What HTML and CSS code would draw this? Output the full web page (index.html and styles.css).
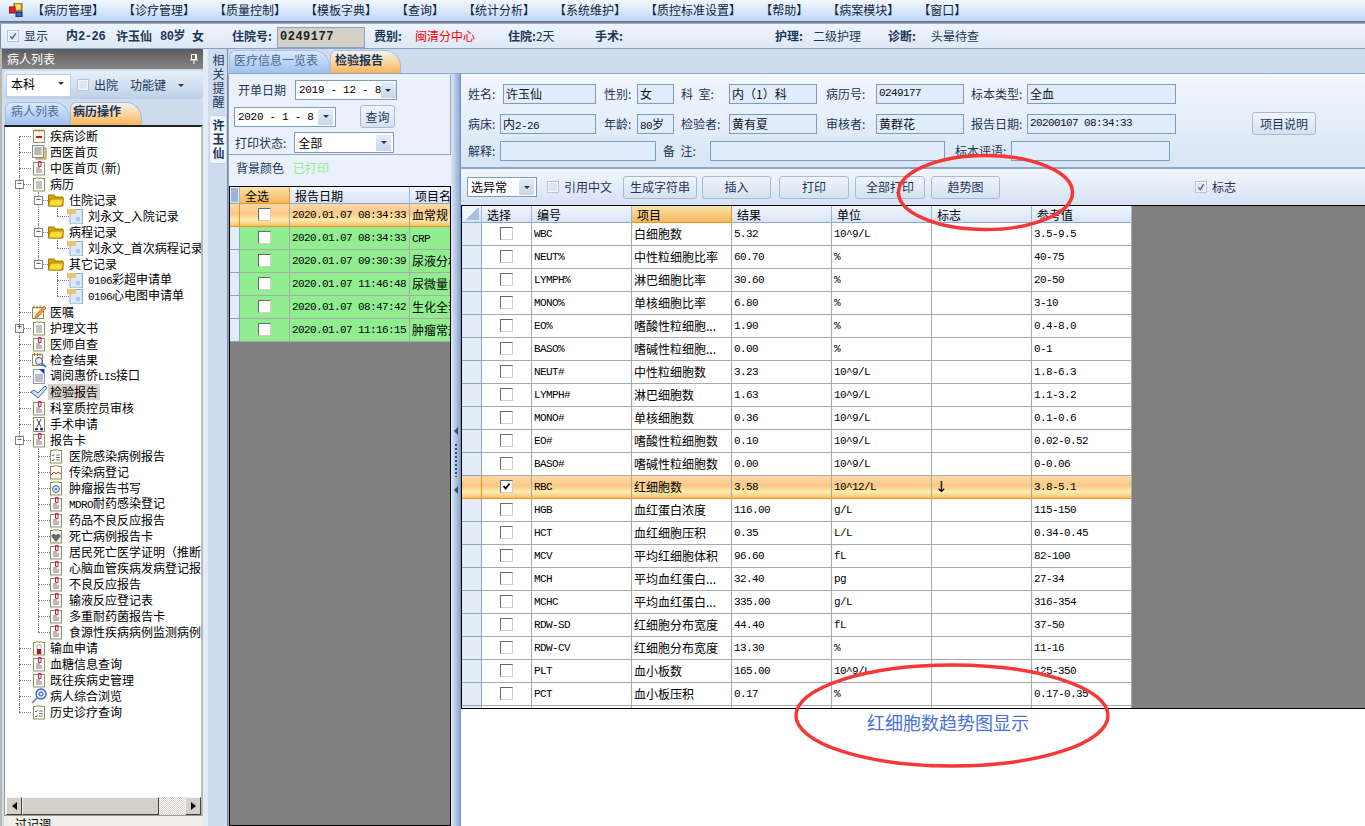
FILE: index.html
```html
<!DOCTYPE html>
<html lang="zh-CN">
<head>
<meta charset="utf-8">
<title>检验报告</title>
<link rel="stylesheet" href="styles.css">
</head>
<body>
<svg class="defs" aria-hidden="true">
  <symbol id="i-logo" viewBox="0 0 14 14"><rect x="5" y="0" width="8" height="8" fill="#e8a020" stroke="#8a6a10"/><rect x="6.500" y="1.500" width="5" height="5" fill="#fbe08a"/><rect x="0" y="4" width="6" height="6" fill="#d22" stroke="#811"/><rect x="7" y="9" width="6" height="5" fill="#36c" stroke="#124"/></symbol>
  <symbol id="i-pin" viewBox="0 0 10 12"><path d="M2.500 1.500h5v5h-5zM1 7h8M5 7v4M6.500 2v4" fill="none" stroke="#fff"/></symbol>
  <symbol id="i-note" viewBox="0 0 16 16"><rect x="2.500" y="2.500" width="11" height="12" fill="#fffdf0" stroke="#8f8f5a"/><path d="M5 1v3M8 1v3M11 1v3" stroke="#c87820"/><path d="M5 9h6" stroke="#d01030" stroke-width="2"/></symbol>
  <symbol id="i-lines" viewBox="0 0 16 16"><rect x="2.500" y="2.500" width="11" height="12.500" fill="#fff" stroke="#8f8f5a"/><rect x="5" y="1" width="6" height="2" fill="#c8c890"/><path d="M5 6h6M5 8h6M5 10h6M5 12h6" stroke="#888"/></symbol>
  <symbol id="i-docs" viewBox="0 0 16 16"><rect x="5" y="4" width="10" height="11" fill="#eecb85" stroke="#a88a50"/><rect x="1.500" y="1.500" width="11" height="12" fill="#f4f4f0" stroke="#888"/><path d="M3.500 4h7M3.500 6h7M3.500 8h7M3.500 10h7" stroke="#777"/></symbol>
  <symbol id="i-clip" viewBox="0 0 16 16"><rect x="2.500" y="2.500" width="11" height="12.500" fill="#fff" stroke="#8f8f5a"/><path d="M5 8h4M5 10h6M5 12h6" stroke="#777"/><path d="M7.500 1.500h2.500v5h-2.500z" fill="none" stroke="#d0104a"/></symbol>
  <symbol id="i-folder" viewBox="0 0 16 16"><path d="M0.500 14V3h5.500l1.500 2H15v9z" fill="#d9a400" stroke="#9a7a10"/><path d="M0.500 14l2-7h13l-2 7z" fill="#ffdd30" stroke="#a88a10"/></symbol>
  <symbol id="i-page" viewBox="0 0 16 16"><rect x="3" y="1.500" width="12.500" height="14.500" fill="#dceaf8" stroke="#9ab"/><rect x="0" y="1" width="9" height="5" fill="#f0c070"/><rect x="9" y="9" width="4" height="4" fill="#a8cce8"/></symbol>
  <symbol id="i-pencil" viewBox="0 0 16 16"><rect x="1.500" y="3.500" width="11" height="11" fill="#fffbe8" stroke="#8f8f5a"/><path d="M3 1.500v3M6 1.500v3M9 1.500v3" stroke="#b06a10"/><path d="M5 11L13 2l2 2-8 9-3 1z" fill="#f0a030" stroke="#b04a20" stroke-width=".7"/></symbol>
  <symbol id="i-mag" viewBox="0 0 16 16"><rect x="1.500" y="2.500" width="10" height="11" fill="#fff" stroke="#8f8f5a"/><path d="M3.500 1v3M6.500 1v3M9 1v3" stroke="#b06a10"/><circle cx="8" cy="9" r="3.500" fill="#dfeefa" stroke="#557"/><path d="M10.500 11.500L15 15" stroke="#3080d0" stroke-width="2"/></symbol>
  <symbol id="i-bdoc" viewBox="0 0 16 16"><rect x="2.500" y="1.500" width="11" height="14" fill="#f3f6fb" stroke="#99a"/><path d="M8 1h5v5z" fill="#1040d0"/><path d="M4 7h8M4 9h8M4 11h8M4 13h8" stroke="#889"/></symbol>
  <symbol id="i-check" viewBox="0 0 16 16"><path d="M0 8l3-2 4 3 7-7 2 2-9 10z" fill="#cfe0f5" stroke="#3a6aa8"/></symbol>
  <symbol id="i-scis" viewBox="0 0 16 16"><rect x="2.500" y="1.500" width="11" height="14" fill="#fff" stroke="#8f8f5a"/><path d="M6 3l4 8M10 3l-4 8" stroke="#444"/><circle cx="5.500" cy="13" r="1.500" fill="#226"/><circle cx="10.500" cy="13" r="1.500" fill="#226"/></symbol>
  <symbol id="i-cl" viewBox="0 0 16 16"><rect x="2.500" y="2.500" width="11" height="12.500" fill="#fff" stroke="#8f8f5a"/><rect x="5" y="1" width="6" height="2" fill="#c8c890"/><path d="M4 7l1 1 1.500-2M4 12l1 1 1.500-2" fill="none" stroke="#2a8a8a"/><path d="M8 7h4M8 9.500h4M8 12h4" stroke="#777"/></symbol>
  <symbol id="i-chart" viewBox="0 0 16 16"><rect x="2.500" y="2.500" width="11" height="12.500" fill="#fff" stroke="#8f8f5a"/><rect x="5" y="1" width="6" height="2" fill="#c8c890"/><path d="M3 11l3-3 2 2 2-2 3 2" fill="none" stroke="#e02020"/></symbol>
  <symbol id="i-target" viewBox="0 0 16 16"><rect x="2.500" y="2.500" width="11" height="12.500" fill="#fff" stroke="#8f8f5a"/><rect x="5" y="1" width="6" height="2" fill="#c8c890"/><circle cx="8" cy="9" r="3.500" fill="#cfe0f5" stroke="#3a6aa8"/><circle cx="8" cy="9" r="1" fill="#3a6aa8"/></symbol>
  <symbol id="i-heart" viewBox="0 0 16 16"><rect x="2.500" y="2.500" width="11" height="12.500" fill="#eee" stroke="#8f8f5a"/><rect x="5" y="1" width="6" height="2" fill="#c8c890"/><path d="M8 14L3.500 8.500C3 6 6.500 5 8 7.500 9.500 5 13 6 12.500 8.500z" fill="#666"/></symbol>
  <symbol id="i-blood" viewBox="0 0 16 16"><rect x="2.500" y="2.500" width="11" height="12.500" fill="#fff" stroke="#8f8f5a"/><rect x="5" y="1" width="6" height="2" fill="#c8c890"/><rect x="6" y="5" width="4" height="9" fill="#fff" stroke="#666" stroke-width=".5"/><rect x="6" y="9" width="4" height="5" fill="#b01818"/></symbol>
  <symbol id="i-blue" viewBox="0 0 16 16"><circle cx="10" cy="6" r="5" fill="#dfeafa" stroke="#3060c8" stroke-width="1.300"/><path d="M8 6a2 2 0 1 1 4 0 2 2 0 1 1-4 0" fill="none" stroke="#2050c0"/><path d="M6.500 9.500L1 15" stroke="#8898b8" stroke-width="2"/></symbol>
  <symbol id="i-tick" viewBox="0 0 13 13"><path d="M3 6l2.500 3L10 3" fill="none" stroke="#000" stroke-width="2"/></symbol>
  <symbol id="i-ltick" viewBox="0 0 13 13"><path d="M3 7l2.500 3L10 3" fill="none" stroke="#4a6a9a" stroke-width="1.800"/></symbol>
</svg>

<header class="menubar">
  <svg class="logo"><use href="#i-logo"/></svg>
  <span>【病历管理】</span><span>【诊疗管理】</span><span>【质量控制】</span><span>【模板字典】</span><span>【查询】</span><span>【统计分析】</span><span>【系统维护】</span><span>【质控标准设置】</span><span>【帮助】</span><span>【病案模块】</span><span>【窗口】</span>
</header>

<div class="infobar">
  <span class="lcheck"><svg><use href="#i-ltick"/></svg></span>
  <span>显示</span>
  <b>内<span class="m mb">2-26</span></b>
  <b>许玉仙</b>
  <b><span class="m mb">80</span>岁</b>
  <b>女</b>
  <b>住院号:</b>
  <span class="idbox">0249177</span>
  <b>费别:</b>
  <span class="red">闽清分中心</span>
  <span><b>住院:</b>2天</span>
  <b>手术:</b>
  <b>护理:</b>
  <span>二级护理</span>
  <b>诊断:</b>
  <span>头晕待查</span>
</div>

<div class="main">
  <aside class="sidebar">
    <div class="side-head"><span>病人列表</span><svg class="pin"><use href="#i-pin"/></svg></div>
    <div class="side-tools">
      <span class="combo side-combo"><span class="combo-text">本科</span><i class="caret"></i></span>
      <span class="lcheck"></span>
      <span class="navy t-out">出院</span>
      <span class="navy t-key">功能键</span>
      <i class="caret"></i>
    </div>
    <div class="tabs side-tabs">
      <span class="tab">病人列表</span>
      <span class="tab on">病历操作</span>
    </div>
    <div class="tree-box">
      <div class="tree-view">
        <ul class="tree">
          <li><div class="node"><svg class="ico"><use href="#i-note"/></svg><span>疾病诊断</span></div></li>
          <li><div class="node"><svg class="ico"><use href="#i-docs"/></svg><span>西医首页</span></div></li>
          <li><div class="node"><svg class="ico"><use href="#i-clip"/></svg><span>中医首页 (新)</span></div></li>
          <li><div class="node"><i class="exp">−</i><svg class="ico"><use href="#i-lines"/></svg><span>病历</span></div>
            <ul>
              <li><div class="node"><i class="exp">−</i><svg class="ico"><use href="#i-folder"/></svg><span>住院记录</span></div>
                <ul><li><div class="node"><svg class="ico"><use href="#i-page"/></svg><span>刘永文_入院记录</span></div></li></ul></li>
              <li><div class="node"><i class="exp">−</i><svg class="ico"><use href="#i-folder"/></svg><span>病程记录</span></div>
                <ul><li><div class="node"><svg class="ico"><use href="#i-page"/></svg><span>刘永文_首次病程记录</span></div></li></ul></li>
              <li><div class="node"><i class="exp">−</i><svg class="ico"><use href="#i-folder"/></svg><span>其它记录</span></div>
                <ul>
                  <li><div class="node"><svg class="ico"><use href="#i-page"/></svg><span><span class="m">0106</span>彩超申请单</span></div></li>
                  <li><div class="node"><svg class="ico"><use href="#i-page"/></svg><span><span class="m">0106</span>心电图申请单</span></div></li>
                </ul></li>
            </ul></li>
          <li><div class="node"><svg class="ico"><use href="#i-pencil"/></svg><span>医嘱</span></div></li>
          <li><div class="node"><i class="exp">+</i><svg class="ico"><use href="#i-lines"/></svg><span>护理文书</span></div></li>
          <li><div class="node"><svg class="ico"><use href="#i-clip"/></svg><span>医师自查</span></div></li>
          <li><div class="node"><svg class="ico"><use href="#i-mag"/></svg><span>检查结果</span></div></li>
          <li><div class="node"><svg class="ico"><use href="#i-bdoc"/></svg><span>调阅惠侨<span class="m">LIS</span>接口</span></div></li>
          <li><div class="node"><svg class="ico"><use href="#i-check"/></svg><span class="sel">检验报告</span></div></li>
          <li><div class="node"><svg class="ico"><use href="#i-clip"/></svg><span>科室质控员审核</span></div></li>
          <li><div class="node"><svg class="ico"><use href="#i-scis"/></svg><span>手术申请</span></div></li>
          <li><div class="node"><i class="exp">−</i><svg class="ico"><use href="#i-clip"/></svg><span>报告卡</span></div>
            <ul>
              <li><div class="node"><svg class="ico"><use href="#i-cl"/></svg><span>医院感染病例报告</span></div></li>
              <li><div class="node"><svg class="ico"><use href="#i-chart"/></svg><span>传染病登记</span></div></li>
              <li><div class="node"><svg class="ico"><use href="#i-target"/></svg><span>肿瘤报告书写</span></div></li>
              <li><div class="node"><svg class="ico"><use href="#i-clip"/></svg><span><span class="m">MDRO</span>耐药感染登记</span></div></li>
              <li><div class="node"><svg class="ico"><use href="#i-clip"/></svg><span>药品不良反应报告</span></div></li>
              <li><div class="node"><svg class="ico"><use href="#i-heart"/></svg><span>死亡病例报告卡</span></div></li>
              <li><div class="node"><svg class="ico"><use href="#i-clip"/></svg><span>居民死亡医学证明（推断</span></div></li>
              <li><div class="node"><svg class="ico"><use href="#i-clip"/></svg><span>心脑血管疾病发病登记报</span></div></li>
              <li><div class="node"><svg class="ico"><use href="#i-clip"/></svg><span>不良反应报告</span></div></li>
              <li><div class="node"><svg class="ico"><use href="#i-clip"/></svg><span>输液反应登记表</span></div></li>
              <li><div class="node"><svg class="ico"><use href="#i-clip"/></svg><span>多重耐药菌报告卡</span></div></li>
              <li><div class="node"><svg class="ico"><use href="#i-clip"/></svg><span>食源性疾病病例监测病例</span></div></li>
            </ul></li>
          <li><div class="node"><svg class="ico"><use href="#i-blood"/></svg><span>输血申请</span></div></li>
          <li><div class="node"><svg class="ico"><use href="#i-clip"/></svg><span>血糖信息查询</span></div></li>
          <li><div class="node"><svg class="ico"><use href="#i-clip"/></svg><span>既往疾病史管理</span></div></li>
          <li><div class="node"><svg class="ico"><use href="#i-blue"/></svg><span>病人综合浏览</span></div></li>
          <li><div class="node"><svg class="ico"><use href="#i-cl"/></svg><span>历史诊疗查询</span></div></li>
        </ul>
      </div>
      <div class="hscroll">
        <span class="sb-btn"><i class="tri-l"></i></span>
        <span class="sb-thumb"></span>
        <span class="sb-track"></span>
        <span class="sb-btn"><i class="tri-r"></i></span>
      </div>
    </div>
    <div class="side-foot">过记调</div>
  </aside>

  <nav class="strip">
    <span class="vtab">相关提醒</span>
    <span class="vtab on">许玉仙</span>
  </nav>

  <section class="content">
    <div class="tabs page-tabs">
      <span class="tab">医疗信息一览表</span>
      <span class="tab on">检验报告</span>
    </div>
    <div class="page">
      <div class="reports">
        <div class="query">
          <div class="q-row q1"><span class="navy">开单日期</span><span class="datebox"><span class="m wide">2019 - 12 - 8</span><i class="dd"><i class="caret"></i></i></span></div>
          <div class="q-row q2"><span class="datebox"><span class="m wide">2020 - 1 - 8</span><i class="dd"><i class="caret"></i></i></span><span class="btn q-btn">查询</span></div>
          <div class="q-row q3"><span class="navy">打印状态:</span><span class="datebox status"><span>全部</span><i class="dd"><i class="caret"></i></i></span></div>
        </div>
        <div class="legend"><span class="navy">背景颜色</span><span class="printed">已打印</span></div>
        <div class="report-grid">
          <table class="list tbl-reports">
            <colgroup><col class="c10"><col class="c50"><col class="c120"><col class="c80"></colgroup>
            <thead><tr><th class="corner"><i></i></th><th class="act">全选</th><th>报告日期</th><th>项目名称</th></tr></thead>
            <tbody>
              <tr class="hot"><th></th><td class="ck"><i class="box"></i></td><td class="m">2020.01.07 08:34:33</td><td>血常规</td></tr>
              <tr class="ok"><th></th><td class="ck"><i class="box"></i></td><td class="m">2020.01.07 08:34:33</td><td><span class="m">CRP</span></td></tr>
              <tr class="ok"><th></th><td class="ck"><i class="box"></i></td><td class="m">2020.01.07 09:30:39</td><td>尿液分析</td></tr>
              <tr class="ok"><th></th><td class="ck"><i class="box"></i></td><td class="m">2020.01.07 11:46:48</td><td>尿微量白</td></tr>
              <tr class="ok"><th></th><td class="ck"><i class="box"></i></td><td class="m">2020.01.07 08:47:42</td><td>生化全套</td></tr>
              <tr class="ok"><th></th><td class="ck"><i class="box"></i></td><td class="m">2020.01.07 11:16:15</td><td>肿瘤常规</td></tr>
            </tbody>
          </table>
        </div>
      </div>

      <div class="splitter"><i class="tri-s"></i><i class="dots"></i><i class="tri-s"></i></div>

      <div class="detail">
        <div class="form">
          <div class="frow r1">
            <span class="lbl">姓名:</span><span class="inp">许玉仙</span>
            <span class="lbl p8">性别:</span><span class="inp">女</span>
            <span class="lbl p7">科&nbsp;&nbsp;室:</span><span class="inp">内（1）科</span>
            <span class="lbl p9">病历号:</span><span class="inp m">0249177</span>
            <span class="lbl p7">标本类型:</span><span class="inp">全血</span>
          </div>
          <div class="frow r2">
            <span class="lbl">病床:</span><span class="inp">内<span class="m">2-26</span></span>
            <span class="lbl p8">年龄:</span><span class="inp"><span class="m">80</span>岁</span>
            <span class="lbl p7">检验者:</span><span class="inp">黄有夏</span>
            <span class="lbl p9">审核者:</span><span class="inp">黄群花</span>
            <span class="lbl p7">报告日期:</span><span class="inp m">20200107 08:34:33</span>
            <span class="btn f-btn">项目说明</span>
          </div>
          <div class="frow r3">
            <span class="lbl">解释:</span><span class="inp"></span>
            <span class="lbl p7">备&nbsp;&nbsp;注:</span><span class="inp"></span>
            <span class="lbl p10">标本评语:</span><span class="inp"></span>
          </div>
        </div>

        <div class="toolbar">
          <span class="datebox abn"><span>选异常</span><i class="dd"><i class="caret"></i></i></span>
          <span class="lcheck t-cb"></span>
          <span class="navy t-ref">引用中文</span>
          <span class="btn b-gen">生成字符串</span>
          <span class="btn b-ins">插入</span>
          <span class="btn b-prt">打印</span>
          <span class="btn b-all">全部打印</span>
          <span class="btn b-trd">趋势图</span>
          <span class="lcheck t-flag"><svg><use href="#i-ltick"/></svg></span>
          <span class="navy t-flagtxt">标志</span>
        </div>

        <div class="result-grid">
          <table class="list results">
            <colgroup><col class="c20"><col class="c50"><col class="c100"><col class="c100"><col class="c100"><col class="c100"><col class="c100"><col class="c100"></colgroup>
            <thead><tr><th class="corner2"><i></i></th><th>选择</th><th>编号</th><th class="act">项目</th><th>结果</th><th>单位</th><th>标志</th><th>参考值</th></tr></thead>
            <tbody>
              <tr><th></th><td class="ck"><i class="box"></i></td><td class="m">WBC</td><td>白细胞数</td><td class="m">5.32</td><td class="m">10^9/L</td><td></td><td class="m">3.5-9.5</td></tr>
              <tr><th></th><td class="ck"><i class="box"></i></td><td class="m">NEUT%</td><td>中性粒细胞比率</td><td class="m">60.70</td><td class="m">%</td><td></td><td class="m">40-75</td></tr>
              <tr><th></th><td class="ck"><i class="box"></i></td><td class="m">LYMPH%</td><td>淋巴细胞比率</td><td class="m">30.60</td><td class="m">%</td><td></td><td class="m">20-50</td></tr>
              <tr><th></th><td class="ck"><i class="box"></i></td><td class="m">MONO%</td><td>单核细胞比率</td><td class="m">6.80</td><td class="m">%</td><td></td><td class="m">3-10</td></tr>
              <tr><th></th><td class="ck"><i class="box"></i></td><td class="m">EO%</td><td>嗜酸性粒细胞...</td><td class="m">1.90</td><td class="m">%</td><td></td><td class="m">0.4-8.0</td></tr>
              <tr><th></th><td class="ck"><i class="box"></i></td><td class="m">BASO%</td><td>嗜碱性粒细胞...</td><td class="m">0.00</td><td class="m">%</td><td></td><td class="m">0-1</td></tr>
              <tr><th></th><td class="ck"><i class="box"></i></td><td class="m">NEUT#</td><td>中性粒细胞数</td><td class="m">3.23</td><td class="m">10^9/L</td><td></td><td class="m">1.8-6.3</td></tr>
              <tr><th></th><td class="ck"><i class="box"></i></td><td class="m">LYMPH#</td><td>淋巴细胞数</td><td class="m">1.63</td><td class="m">10^9/L</td><td></td><td class="m">1.1-3.2</td></tr>
              <tr><th></th><td class="ck"><i class="box"></i></td><td class="m">MONO#</td><td>单核细胞数</td><td class="m">0.36</td><td class="m">10^9/L</td><td></td><td class="m">0.1-0.6</td></tr>
              <tr><th></th><td class="ck"><i class="box"></i></td><td class="m">EO#</td><td>嗜酸性粒细胞数</td><td class="m">0.10</td><td class="m">10^9/L</td><td></td><td class="m">0.02-0.52</td></tr>
              <tr><th></th><td class="ck"><i class="box"></i></td><td class="m">BASO#</td><td>嗜碱性粒细胞数</td><td class="m">0.00</td><td class="m">10^9/L</td><td></td><td class="m">0-0.06</td></tr>
              <tr class="hot"><th></th><td class="ck"><i class="box"><svg><use href="#i-tick"/></svg></i></td><td class="m">RBC</td><td>红细胞数</td><td class="m">3.58</td><td class="m">10^12/L</td><td class="flag">↓</td><td class="m">3.8-5.1</td></tr>
              <tr><th></th><td class="ck"><i class="box"></i></td><td class="m">HGB</td><td>血红蛋白浓度</td><td class="m">116.00</td><td class="m">g/L</td><td></td><td class="m">115-150</td></tr>
              <tr><th></th><td class="ck"><i class="box"></i></td><td class="m">HCT</td><td>血红细胞压积</td><td class="m">0.35</td><td class="m">L/L</td><td></td><td class="m">0.34-0.45</td></tr>
              <tr><th></th><td class="ck"><i class="box"></i></td><td class="m">MCV</td><td>平均红细胞体积</td><td class="m">96.60</td><td class="m">fL</td><td></td><td class="m">82-100</td></tr>
              <tr><th></th><td class="ck"><i class="box"></i></td><td class="m">MCH</td><td>平均血红蛋白...</td><td class="m">32.40</td><td class="m">pg</td><td></td><td class="m">27-34</td></tr>
              <tr><th></th><td class="ck"><i class="box"></i></td><td class="m">MCHC</td><td>平均血红蛋白...</td><td class="m">335.00</td><td class="m">g/L</td><td></td><td class="m">316-354</td></tr>
              <tr><th></th><td class="ck"><i class="box"></i></td><td class="m">RDW-SD</td><td>红细胞分布宽度</td><td class="m">44.40</td><td class="m">fL</td><td></td><td class="m">37-50</td></tr>
              <tr><th></th><td class="ck"><i class="box"></i></td><td class="m">RDW-CV</td><td>红细胞分布宽度</td><td class="m">13.30</td><td class="m">%</td><td></td><td class="m">11-16</td></tr>
              <tr><th></th><td class="ck"><i class="box"></i></td><td class="m">PLT</td><td>血小板数</td><td class="m">165.00</td><td class="m">10^9/L</td><td></td><td class="m">125-350</td></tr>
              <tr><th></th><td class="ck"><i class="box"></i></td><td class="m">PCT</td><td>血小板压积</td><td class="m">0.17</td><td class="m">%</td><td></td><td class="m">0.17-0.35</td></tr>
              <tr><th></th><td></td><td></td><td></td><td></td><td></td><td></td><td></td></tr>
            </tbody>
          </table>
        </div>
        <div class="chart-area">红细胞数趋势图显示</div>
      </div>
    </div>
  </section>
</div>

<svg class="annot" viewBox="0 0 1365 826" aria-hidden="true">
  <ellipse cx="985.500" cy="192.500" rx="87" ry="37"/>
  <ellipse cx="952" cy="715.500" rx="156" ry="50.500"/>
</svg>
</body>
</html>
```

FILE: styles.css
```css
* { box-sizing: border-box; }
html, body { margin: 0; padding: 0; }
body {
  width: 1365px; height: 826px; overflow: hidden; display: flex; flex-direction: column; position: relative;
  font: 12px/16px "Noto Sans CJK SC", "Liberation Sans", sans-serif; color: #000; background: #cfdcee;
}
i { font-style: normal; display: block; }
ul { list-style: none; margin: 0; padding: 0; }
.defs { position: absolute; width: 0; height: 0; }
.m { font-family: "Liberation Mono", "Noto Sans CJK SC", monospace; font-size: 11px; letter-spacing: -.6px; }
.mb { font-size: 12px; letter-spacing: -.4px; }
.wide { letter-spacing: -.3px; font-size: 11px; white-space: nowrap; }
.navy { color: #1d3557; }
.red { color: #f00; }

.menubar {
  height: 24px; flex: none; display: flex; align-items: flex-start; gap: 19px; padding: 2px 0 0 32px; position: relative;
  background: linear-gradient(#f3f7fd 0, #c0d8f8 21px, #5f6f86 21px, #7a8aa0 23px, #c8d4e4 24px); color: #10263f;
}
.logo { position: absolute; left: 9px; top: 3px; width: 14px; height: 14px; }

.infobar {
  height: 25px; flex: none; display: grid; align-items: center; padding-left: 6px; color: #1d3557;
  grid-template-columns: 17px 42px 50px 44px 32px 40px 45px 97px 41px 93px 87px 180px 38px 75px 43px 60px;
  background: linear-gradient(#f0f5fd, #dde8f6); border-bottom: 1px solid #86a0c4; border-left: 1px solid #7a8aa0;
}
.idbox {
  width: 88px; height: 21px; margin-top: 3px; background: #d4d0c8; border: 1px solid #8aa3c6; color: #222;
  font: bold 12px/18px "Liberation Mono", monospace; padding-left: 2px; letter-spacing: .5px;
}
.lcheck {
  width: 12px; height: 12px; border: 1px solid #b4c4da; background: #dfe6ef; box-shadow: inset 0 0 0 1px #f5f8fc; display: block; flex: none;
}
.lcheck svg { display: block; width: 10px; height: 10px; }

.main { flex: 1; min-height: 0; display: flex; }

.sidebar { width: 203px; flex: none; display: flex; flex-direction: column; border-left: 2px solid #b8b8b0; }
.side-head {
  height: 20px; flex: none; display: flex; justify-content: space-between; align-items: center; padding: 0 4px 0 5px; color: #fff;
  background: linear-gradient(#5c5c5c, #858585);
}
.pin { width: 10px; height: 12px; }
.side-tools {
  height: 28px; margin: 2px 0 0 2px; flex: none; display: flex; align-items: center; padding-left: 2px; border-radius: 4px;
  background: linear-gradient(#e8f0fa, #bdd0e8);
}
.combo { display: flex; align-items: center; justify-content: space-between; background: #fff; border: 1px solid #c2d2e6; }
.side-combo { width: 65px; height: 23px; padding: 0 6px 3px 4px; margin-right: 6px; }
.caret { width: 0; height: 0; border: 3px solid transparent; border-top: 3px solid #334; border-bottom: 0; flex: none; }
.t-out { margin-left: 5px; }
.t-key { margin-left: 12px; margin-right: 12px; }

.tabs { display: flex; align-items: flex-end; flex: none; }
.tab {
  height: 23px; padding: 0 6px; border-radius: 6px 16px 0 0; color: #466a9a; border: 1px solid #a8bedc; border-bottom: 0;
  background: linear-gradient(#dce8f8, #9fc0ee);
}
.tab.on { color: #15355f; font-weight: bold; background: linear-gradient(#eef2f6, #fcd9a4 45%, #fbb55a); }
.side-tabs { height: 26px; padding-left: 3px; }
.side-tabs .tab { width: 65px; padding-left: 5px; }
.side-tabs .tab.on { width: 72px; padding-left: 2px; }
.page-tabs { height: 25px; padding-left: 1px; border-bottom: 1px solid #8ea6c6; }
.page-tabs .tab { padding-top: 1px; }
.page-tabs .tab:first-child { width: 101px; padding-left: 4px; }
.page-tabs .tab.on { width: 71px; padding-left: 4px; }

.tree-box { flex: 1; min-height: 0; display: flex; flex-direction: column; margin-left: 2px; background: #fff; border: 1px solid #999; border-top: 2px solid #222; border-right: 2px solid #bbb; padding-left: 1px; }
.tree-view { flex: 1; min-height: 0; overflow: hidden; padding-top: 1px; }
.tree li { position: relative; white-space: nowrap; }
.tree li::before { content: ""; position: absolute; left: 13px; top: 8px; width: 12px; border-top: 1px dotted #808080; }
.tree li::after { content: ""; position: absolute; left: 13px; top: 0; bottom: 0; border-left: 1px dotted #808080; }
.tree li:last-child::after { bottom: auto; height: 8px; }
.tree > li:first-child::after { top: 8px; }
.node { position: relative; height: 16px; display: flex; align-items: center; padding-left: 25px; z-index: 1; }
.tree ul .node { padding-left: 23px; }
.tree ul { margin-left: 19px; }
.ico { width: 16px; height: 16px; flex: none; margin-right: 3px; }
.tree ul .ico { margin-right: 5px; }
.exp {
  position: absolute; left: 9px; top: 4px; width: 9px; height: 9px; border: 1px solid #808080; background: #fff;
  font: 9px/7px "Liberation Mono", monospace; text-align: center; color: #000;
}
.tree ul .exp { left: 9px; }
.sel { background: #d4d0c8; padding: 0 2px; margin-left: -2px; line-height: 16px; }
.hscroll { height: 18px; flex: none; display: flex; background: #d4d0c8; }
.sb-btn { width: 16px; display: flex; align-items: center; justify-content: center; background: #d4d0c8; border: 1px solid; border-color: #f4f3ee #404040 #404040 #f4f3ee; flex: none; }
.sb-thumb { width: 137px; background: #d4d0c8; border: 1px solid; border-color: #f4f3ee #404040 #404040 #f4f3ee; flex: none; }
.sb-track { flex: 1; background: repeating-conic-gradient(#d4d0c8 0 25%, #fff 0 50%) 0 0 / 2px 2px; }
.tri-l { border: 4px solid transparent; border-right: 5px solid #000; border-left: 0; }
.tri-r { border: 4px solid transparent; border-left: 5px solid #000; border-right: 0; }
.side-foot { height: 10px; flex: none; background: #f0efe9; padding-left: 11px; overflow: hidden; line-height: 16px; margin-left: 2px; }

.strip { width: 25px; flex: none; background: linear-gradient(90deg, #e3ebf7 0 5px, #cfdcee 5px); padding: 3px 0 0 6px; display: flex; flex-direction: column; border-right: 1px solid #7a8aa0; }
.vtab { width: 18px; writing-mode: vertical-rl; text-orientation: upright; letter-spacing: 2px; color: #1d3557; line-height: 18px; }
.vtab:first-child { height: 63px; padding-top: 2px; }
.vtab.on { height: 49px; background: #f2f6fc; font-weight: bold; border: 1px solid #c5d4e8; border-radius: 3px; letter-spacing: 2px; padding-top: 3px; line-height: 16px; }

.content { flex: 1; min-width: 0; display: flex; flex-direction: column; }
.page { flex: 1; min-height: 0; display: flex; }

.reports { width: 223px; flex: none; display: flex; flex-direction: column; background: #eaf1fb; border-left: 1px solid #8ea6c6; border-top: 1px solid #e8eef8; }
.query { height: 80px; flex: none; display: flex; flex-direction: column; border-bottom: 1px solid #8ea6c6; border-right: 1px solid #8ea6c6; }
.q-row { display: flex; align-items: center; }
.q1 { height: 20px; margin-top: 5px; padding-left: 9px; gap: 9px; }
.q2 { height: 23px; margin-top: 5px; padding-left: 5px; }
.q3 { height: 21px; margin-top: 4px; padding-left: 6px; gap: 8px; }
.datebox { display: flex; align-items: center; justify-content: space-between; width: 102px; height: 20px; background: #fff; border: 1px solid #7e9bc4; padding-left: 3px; flex: none; }
.dd { width: 15px; height: 16px; margin-right: 2px; background: linear-gradient(#e4ecf7, #c8d6ea); display: flex; align-items: center; justify-content: center; flex: none; }
.status { width: 100px; height: 21px; }
.btn {
  display: flex; align-items: center; justify-content: center; flex: none; color: #1d3557; border: 1px solid #a7bad3; border-radius: 3px;
  background: linear-gradient(#f1f5fc, #d5e1f1);
}
.q-btn { width: 35px; height: 23px; margin-left: 24px; }
.legend { height: 31px; flex: none; display: flex; align-items: center; gap: 9px; padding-left: 7px; padding-bottom: 5px; }
.printed { color: #90ee90; }
.report-grid { flex: 1; min-height: 0; background: #808080; border: 1px solid #000; overflow: hidden; }

.list { border-collapse: separate; border-spacing: 0; table-layout: fixed; }
.tbl-reports { width: 260px; }
.results { width: 670px; }
.c10 { width: 10px; } .c20 { width: 20px; } .c50 { width: 50px; } .c80 { width: 80px; } .c100 { width: 100px; } .c120 { width: 120px; }
.list thead th {
  height: 17px; padding: 0 0 0 5px; font-weight: normal; text-align: left; overflow: hidden; white-space: nowrap;
  background: linear-gradient(#f1f6fd, #d8e5f6); border-right: 1px solid #9db4d2; border-bottom: 1px solid #8ea6c6; line-height: 15px;
}
.list thead th.act { background: linear-gradient(#fbe3a8, #f5b860); border-color: #f09020; }
.list thead .corner { padding: 1px; }
.corner i { width: 7px; height: 14px; background: #9ab4d8; }
.list thead .corner2 { padding: 2px; }
.corner2 i { width: 15px; height: 12px; background: linear-gradient(135deg, #f1f6fd 50%, #a9c0e0 50%); }
.list tbody th { background: #e3ebf7; border-right: 1px solid #8ea6c6; border-bottom: 1px solid #8ea6c6; padding: 0; }
.list td {
  height: 23px; padding: 0 0 0 2px; border-right: 1px solid #a9a9a9; border-bottom: 1px solid #a9a9a9; background: #fff;
  white-space: nowrap; overflow: hidden; line-height: 16px;
}
.list td.ck { padding: 0; }
.box {
  width: 13px; height: 13px; margin: 0 auto 1px; background: #fff; border: 1px solid; border-color: #6a6a6a #d0cfc8 #d0cfc8 #6a6a6a;
}
.box svg { display: block; width: 11px; height: 11px; }
.ok td { background: #90ee90; }
.hot td, .hot th, .list tbody .hot th {
  background: linear-gradient(#fdd8a6, #fbc884 45%, #fdeeb0 72%, #fbbf66); border-bottom: 1px solid #f09020;
}
.list tbody .hot th { border-right-color: #f09020; }
.list td.flag { padding-left: 3px; font: 15px/16px "DejaVu Sans", sans-serif; }

.splitter {
  width: 10px; flex: none; background: linear-gradient(90deg, #e0e9f6, #8aa8d2); border-right: 1px solid #7a93b8;
  display: flex; flex-direction: column; align-items: center; justify-content: center; gap: 9px; padding-top: 20px;
}
.tri-s { border: 4px solid transparent; border-right: 4px solid #2a4f8a; border-left: 0; }
.dots { width: 2px; height: 33px; background: repeating-linear-gradient(#2a4f8a 0 2px, transparent 2px 4px); }

.detail { flex: 1; min-width: 0; display: flex; flex-direction: column; background: #fff; }
.form { height: 95px; flex: none; padding: 10px 0 0 7px; background: linear-gradient(#f3f7fd, #d8e5f5); border-bottom: 2px solid #8ea6c6; }
.frow { display: grid; height: 20px; align-items: center; color: #1d3557; }
.r1 { grid-template-columns: 35px 93px 41px 37px 55px 88px 59px 88px 63px 149px; }
.r2 { grid-template-columns: 32px 96px 41px 37px 55px 88px 59px 88px 63px 149px 140px; margin-top: 9px; }
.r3 { grid-template-columns: 32px 156px 54px 235px 66px 159px; margin-top: 8px; }
.lbl { white-space: nowrap; }
.p7 { padding-left: 7px; } .p8 { padding-left: 8px; } .p9 { padding-left: 9px; } .p10 { padding-left: 10px; }
.inp { height: 20px; background: #e1edfc; border: 1px solid #7e9bc4; padding: 0 2px; line-height: 17px; color: #111; white-space: nowrap; overflow: hidden; }
.f-btn { height: 23px; margin: -1px 0 0 76px; width: 64px; }

.toolbar { height: 36px; flex: none; display: flex; align-items: center; padding-left: 6px; background: linear-gradient(#f3f7fd, #d5e2f3); }
.abn { width: 70px; }
.t-cb { margin-left: 10px; }
.t-ref { margin-left: 5px; }
.toolbar .btn { height: 23px; }
.b-gen { width: 74px; margin-left: 11px; }
.b-ins { width: 69px; margin-left: 5px; }
.b-prt { width: 70px; margin-left: 8px; }
.b-all { width: 70px; margin-left: 6px; }
.b-trd { width: 69px; margin-left: 6px; }
.t-flag { margin-left: 195px; }
.t-flagtxt { margin-left: 5px; }

.result-grid { height: 504px; flex: none; background: #808080; border-top: 1px solid #000; border-left: 1px solid #000; border-bottom: 1px solid #000; overflow: hidden; }
.chart-area { flex: 1; padding: 1px 0 0 406px; font-size: 18px; line-height: 24px; color: #4a72d8; white-space: nowrap; overflow: hidden; }

.annot { position: absolute; left: 0; top: 0; width: 1365px; height: 826px; pointer-events: none; }
.annot ellipse { fill: none; stroke: #f53838; stroke-width: 3.5; }
```
